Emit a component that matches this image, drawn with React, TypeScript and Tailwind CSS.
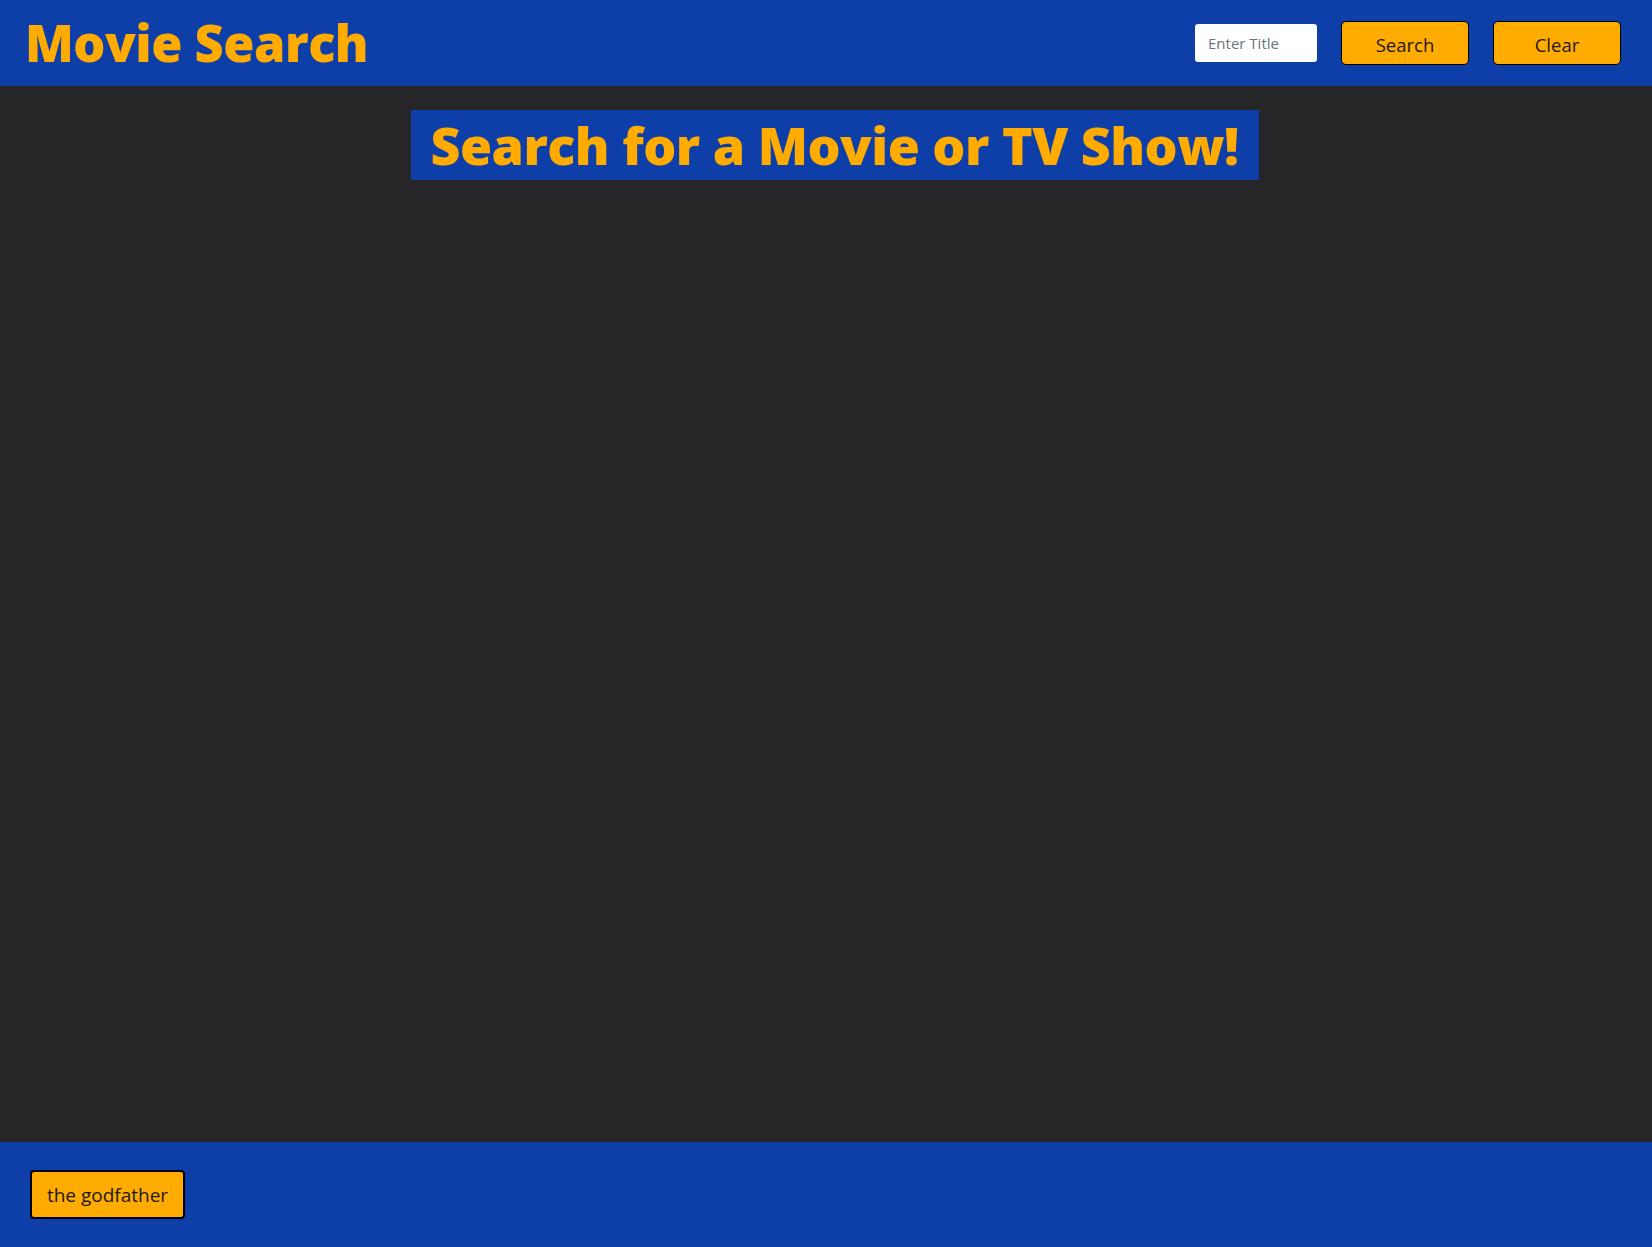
export default function App() {
    return (
        <div className="flex h-[1247px] w-full flex-col bg-[#262628] font-['Open_Sans',sans-serif]">
            <header className="flex h-[86px] shrink-0 items-center justify-between bg-[#0e3ea8] pl-[25px] pr-[31px]">
                <h1 className="text-[50.5px] leading-none font-extrabold tracking-[-0.5px] text-[#ffab00]">Movie Search</h1>
                <div className="flex items-center gap-6">
                    <input
                        type="text"
                        placeholder="Enter Title"
                        className="h-[38px] w-[122px] rounded-[3px] bg-white px-[13px] text-[15px] text-gray-800 outline-none placeholder:text-[#6b7280]"
                    />
                    <button className="h-[44px] w-[128px] rounded-[5px] border border-black bg-[#ffab00] pt-[4px] text-[18.5px] text-[#1a1a1a]">
                        Search
                    </button>
                    <button className="h-[44px] w-[128px] rounded-[5px] border border-black bg-[#ffab00] pt-[4px] text-[18.5px] text-[#1a1a1a]">
                        Clear
                    </button>
                </div>
            </header>
            <main className="flex flex-1 flex-col items-center pl-[17px] pt-6">
                <h2 className="flex h-[70px] w-[848px] items-center justify-center bg-[#0e3ea8] text-[52px] leading-none font-extrabold tracking-[-0.5px] text-[#ffab00]">
                    Search for a Movie or TV Show!
                </h2>
            </main>
            <footer className="flex h-[105px] shrink-0 items-center bg-[#0e3ea8] pl-[30px]">
                <button className="h-[49px] w-[155px] rounded-[4px] border-2 border-black bg-[#ffab00] pt-[2px] text-[19px] text-[#1a1a1a]">
                    the godfather
                </button>
            </footer>
        </div>
    )
}
